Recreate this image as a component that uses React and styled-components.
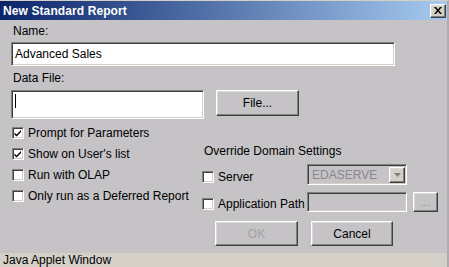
import React from "react";
import styled, { createGlobalStyle, css } from "styled-components";

const Global = createGlobalStyle`
  html, body { margin: 0; padding: 0; background: #c5c3c6; }
  body { font-family: "Liberation Sans", Arial, sans-serif; font-size: 12px; color: #000; }
  * { box-sizing: border-box; }
`;

const sunken = css`
  border: 1px solid;
  border-color: #808080 #ffffff #ffffff #808080;
  box-shadow: inset 1px 1px 0 #404040, inset -1px -1px 0 #d4d0c8;
`;

const raised = css`
  border: 1px solid;
  border-color: #ffffff #404040 #404040 #ffffff;
  box-shadow: inset -1px -1px 0 #808080, inset 1px 1px 0 #dcdadc;
`;

const Window = styled.div`
  width: 449px;
  height: 267px;
  display: flex;
  flex-direction: column;
  background: #c5c3c6;
  border-top: 1px solid #d4d0c8;
  border-right: 2px solid #aeacb0;
  overflow: hidden;
`;

const TitleBar = styled.div`
  height: 19px;
  flex: none;
  display: flex;
  align-items: center;
  justify-content: space-between;
  padding: 0 1px 0 3px;
  background: linear-gradient(to right, #0a246a, #a6caf0);
`;

const TitleText = styled.span`
  color: #fff;
  font-weight: bold;
  font-size: 12px;
  letter-spacing: 0.1px;
`;

const CloseButton = styled.div`
  ${raised};
  width: 16px;
  height: 14px;
  background: #d4d0c8;
  display: flex;
  align-items: center;
  justify-content: center;
`;

const Body = styled.div`
  flex: 1;
  padding: 4px 0 0 11px;
  display: flex;
  flex-direction: column;
`;

const Label = styled.div`
  height: 14px;
  line-height: 14px;
  padding-left: ${(p) => p.$indent ?? 2}px;
  margin-top: ${(p) => p.$top ?? 0}px;
  white-space: nowrap;
`;

const TextField = styled.div`
  ${sunken};
  width: ${(p) => p.$w}px;
  height: ${(p) => p.$h}px;
  margin-top: ${(p) => p.$top ?? 0}px;
  background: ${(p) => (p.$disabled ? "#c5c3c6" : "#fff")};
  padding: ${(p) => p.$pad ?? "0 0 0 3px"};
  display: flex;
  align-items: ${(p) => p.$align ?? "center"};
  line-height: 14px;
  flex: none;
`;

const Caret = styled.span`
  display: block;
  width: 1px;
  height: 14px;
  background: #000;
`;

const Row = styled.div`
  display: flex;
  align-items: ${(p) => p.$align ?? "flex-start"};
  gap: ${(p) => p.$gap ?? 0}px;
  margin-top: ${(p) => p.$top ?? 0}px;
`;

const Button = styled.div`
  ${raised};
  width: ${(p) => p.$w}px;
  height: ${(p) => p.$h}px;
  background: #c5c3c6;
  display: flex;
  align-items: center;
  justify-content: center;
  color: ${(p) => (p.$disabled ? "#a0a0a0" : "#000")};
  flex: none;
  line-height: 14px;
`;

const Lower = styled.div`
  display: grid;
  grid-template-columns: 191px 1fr;
  margin-top: 7px;
`;

const LeftColumn = styled.div`
  display: flex;
  flex-direction: column;
  gap: 7px;
  padding-left: 1px;
`;

const RightColumn = styled.div`
  display: flex;
  flex-direction: column;
  padding-top: 18px;
`;

const CheckRow = styled.label`
  display: flex;
  align-items: center;
  gap: 4px;
  height: 14px;
  line-height: 14px;
  white-space: nowrap;
  width: ${(p) => (p.$w ? `${p.$w}px` : "auto")};
  margin-bottom: ${(p) => p.$mb ?? 0}px;
  flex: none;
`;

const Box = styled.span`
  ${sunken};
  width: 12px;
  height: 12px;
  background: #fff;
  display: flex;
  align-items: center;
  justify-content: center;
  flex: none;
`;

const ComboText = styled.span`
  flex: 1;
  color: #8a888c;
  padding-left: 2px;
`;

const ArrowButton = styled.div`
  ${raised};
  width: 16px;
  height: 16px;
  background: #d4d0c8;
  display: flex;
  align-items: center;
  justify-content: center;
  margin-right: 1px;
`;

const Dots = styled.span`
  color: #909090;
  font-size: 10px;
  line-height: 10px;
  letter-spacing: 0.5px;
  margin-top: 2px;
`;

const StatusBar = styled.div`
  height: 14px;
  flex: none;
  background: #d4d0c8;
  line-height: 14px;
  padding-left: 3px;
  margin-top: 1px;
`;

const Check = ({ checked, children, w, mb }) => (
  <CheckRow $w={w} $mb={mb}>
    <Box>
      {checked && (
        <svg width="8" height="8" viewBox="0 0 8 8">
          <path d="M0.5 3.5 L2.5 5.5 L7 1 L7 3 L2.5 7.5 L0.5 5.5 Z" fill="#000" />
        </svg>
      )}
    </Box>
    <span>{children}</span>
  </CheckRow>
);

export default function App() {
  return (
    <>
      <Global />
      <Window>
        <TitleBar>
          <TitleText>New Standard Report</TitleText>
          <CloseButton>
            <svg width="8" height="7" viewBox="0 0 8 7">
              <path d="M0 0 L2 0 L4 2.5 L6 0 L8 0 L5 3.5 L8 7 L6 7 L4 4.5 L2 7 L0 7 L3 3.5 Z" fill="#000" />
            </svg>
          </CloseButton>
        </TitleBar>
        <Body>
          <Label>Name:</Label>
          <TextField $w={384} $h={24} $top={4}>Advanced Sales</TextField>
          <Label $top={5}>Data File:</Label>
          <Row $gap={12} $top={5}>
            <TextField $w={193} $h={29} $align="flex-start" $pad="3px 0 0 3px">
              <Caret />
            </TextField>
            <Button $w={83} $h={26}>File...</Button>
          </Row>
          <Lower>
            <LeftColumn>
              <Check checked>Prompt for Parameters</Check>
              <Check checked>Show on User's list</Check>
              <Check>Run with OLAP</Check>
              <Check>Only run as a Deferred Report</Check>
            </LeftColumn>
            <RightColumn>
              <Label $indent={2}>Override Domain Settings</Label>
              <Row $align="flex-end" $top={6}>
                <Check w={105} mb={1}>Server</Check>
                <TextField $w={100} $h={21} $disabled $pad="0 0 0 2px">
                  <ComboText>EDASERVE</ComboText>
                  <ArrowButton>
                    <svg width="7" height="4" viewBox="0 0 7 4">
                      <path d="M0 0 L7 0 L3.5 4 Z" fill="#808080" />
                    </svg>
                  </ArrowButton>
                </TextField>
              </Row>
              <Row $align="flex-end" $top={7}>
                <Check w={105} mb={1}>Application Path</Check>
                <TextField $w={100} $h={20} $disabled />
                <Button $w={25} $h={20} style={{ marginLeft: 6 }}>
                  <Dots>...</Dots>
                </Button>
              </Row>
              <Row $gap={13} $top={9} style={{ paddingLeft: 13 }}>
                <Button $w={83} $h={25} $disabled>OK</Button>
                <Button $w={82} $h={25}>Cancel</Button>
              </Row>
            </RightColumn>
          </Lower>
        </Body>
        <StatusBar>Java Applet Window</StatusBar>
      </Window>
    </>
  );
}
